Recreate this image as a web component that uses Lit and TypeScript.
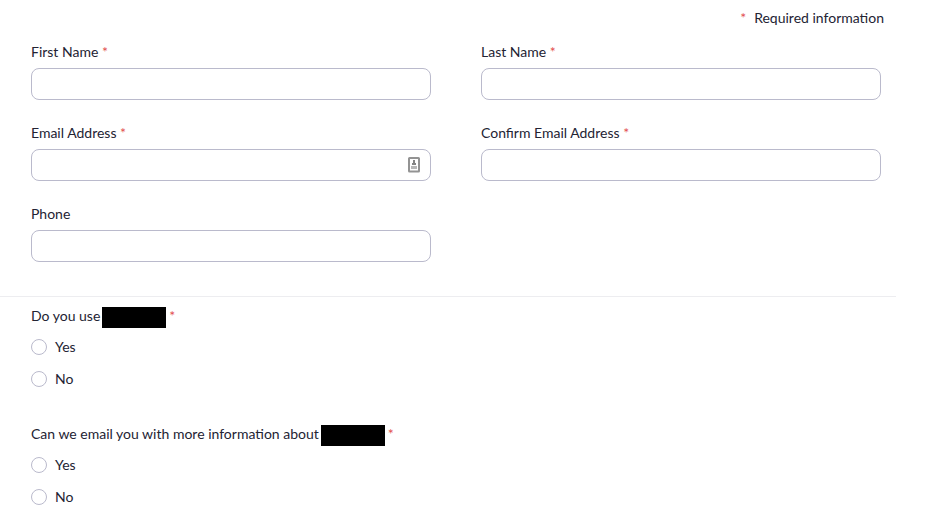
import { LitElement, html, css, nothing } from "lit";
import { customElement } from "lit/decorators.js";

@customElement("app-root")
export class AppRoot extends LitElement {
  static styles = css`
    :host {
      display: block;
      font: 14px/20px Lato, sans-serif;
      color: #232333;
    }
    * { box-sizing: border-box; }
    form { margin-right: 29px; }
    .note { margin: 0; padding: 8px 12px 0 0; text-align: right; }
    .note .star { margin-right: 8px; }
    .star { color: #e25050; }
    .fields {
      display: grid;
      grid-template-columns: 1fr 1fr;
      gap: 23px 50px;
      padding: 14px 15px 34px 31px;
    }
    .field { display: flex; flex-direction: column; gap: 6px; }
    .box { position: relative; }
    .box input {
      display: block;
      width: 100%;
      height: 32px;
      border: 1px solid #babacc;
      border-radius: 8px;
      padding: 0 12px;
      font: inherit;
      color: inherit;
      background: #fff;
    }
    .fill { position: absolute; right: 11px; top: 8px; width: 12px; height: 16px; }
    .questions { border-top: 1px solid #ededf0; padding: 10px 15px 0 31px; }
    fieldset { border: 0; margin: 0; padding: 0; min-width: 0; }
    fieldset + fieldset { margin-top: 24px; }
    legend { padding: 0; display: flex; line-height: 18px; margin-bottom: 9px; }
    .redacted { width: 64px; height: 21px; background: #000; margin: 0 3px 0 2px; }
    .option { display: flex; align-items: center; gap: 8px; height: 20px; margin-bottom: 12px; }
    .option input {
      appearance: none;
      width: 16px;
      height: 16px;
      margin: 0;
      border: 1px solid #babacc;
      border-radius: 50%;
      background: #fff;
    }
    .option input:checked { border: 5px solid #0e71eb; }
  `;

  private star = html`<span class="star">*</span>`;

  private field(id: string, label: string, required = true, type = "text") {
    return html`<div class="field">
      <label for=${id}>${label} ${required ? this.star : nothing}</label>
      <div class="box">
        <input id=${id} name=${id} type=${type} ?required=${required} />
        ${id === "email"
          ? html`<svg class="fill" viewBox="0 0 12 16" aria-hidden="true">
              <rect x="1" y="1" width="10" height="13.5" rx="0.5" fill="#fff" stroke="#939393" stroke-width="2" />
              <path d="M5 3h2v3h1v2H4V6h1z" fill="#858585" />
              <path d="M3 9h6v3H3z" fill="#b8b8b8" />
            </svg>`
          : nothing}
      </div>
    </div>`;
  }

  private question(name: string, text: string) {
    return html`<fieldset>
      <legend><span>${text}</span><span class="redacted"></span>${this.star}</legend>
      ${["Yes", "No"].map(
        (o) => html`<label class="option"><input type="radio" name=${name} value=${o} />${o}</label>`
      )}
    </fieldset>`;
  }

  render() {
    return html`<form>
      <p class="note">${this.star}Required information</p>
      <div class="fields">
        ${this.field("first", "First Name")} ${this.field("last", "Last Name")}
        ${this.field("email", "Email Address", true, "email")}
        ${this.field("confirm", "Confirm Email Address", true, "email")}
        ${this.field("phone", "Phone", false, "tel")}
      </div>
      <div class="questions">
        ${this.question("use", "Do you use")}
        ${this.question("contact", "Can we email you with more information about")}
      </div>
    </form>`;
  }
}
